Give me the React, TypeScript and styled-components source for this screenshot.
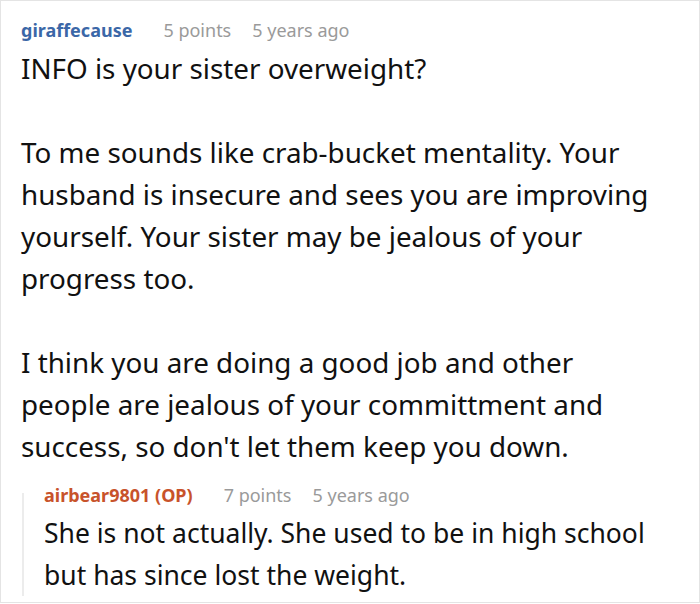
import React from "react";
import styled, { createGlobalStyle } from "styled-components";

const GlobalStyle = createGlobalStyle`
  html, body {
    margin: 0;
    padding: 0;
    background: #fff;
  }
  body {
    font-family: "Noto Sans", "Open Sans", sans-serif;
    color: #111;
  }
`;

const Card = styled.div`
  box-sizing: border-box;
  width: 700px;
  height: 603px;
  border: 1px solid #e4e4e4;
  padding: 17px 20px 0 20px;
  overflow: hidden;
`;

const Meta = styled.div`
  display: flex;
  align-items: center;
  height: 24px;
  font-size: 18px;
  line-height: 24px;
  margin-bottom: 5px;
`;

const Author = styled.span<{ $op?: boolean }>`
  font-weight: 700;
  color: ${(p) => (p.$op ? "#c8532b" : "#3b67a7")};
  margin-right: 31px;
`;

const Stat = styled.span`
  color: #9a9a9a;
  margin-right: 21px;
`;

const Body = styled.div<{ $width?: number; $size: number }>`
  width: ${(p) => (p.$width ? `${p.$width}px` : "auto")};
  font-size: ${(p) => p.$size}px;
  line-height: 42px;

  p {
    margin: 0;
  }

  p + p {
    margin-top: 42px;
  }
`;

const Reply = styled.div`
  position: relative;
  margin: 16px 0 0 1px;
  padding-left: 22px;

  &::before {
    content: "";
    position: absolute;
    left: 0;
    top: 10px;
    bottom: 0;
    width: 2px;
    background: #ececec;
  }
`;

const App = () => {
  return (
    <>
      <GlobalStyle />
      <Card>
        <Meta>
          <Author>giraffecause</Author>
          <Stat>5 points</Stat>
          <Stat>5 years ago</Stat>
        </Meta>
        <Body $width={636} $size={27.8}>
          <p>INFO is your sister overweight?</p>
          <p>
            To me sounds like crab-bucket mentality. Your husband is insecure
            and sees you are improving yourself. Your sister may be jealous of
            your progress too.
          </p>
          <p>
            I think you are doing a good job and other people are jealous of
            your committment and success, so don't let them keep you down.
          </p>
        </Body>
        <Reply>
          <Meta>
            <Author $op>airbear9801 (OP)</Author>
            <Stat>7 points</Stat>
            <Stat>5 years ago</Stat>
          </Meta>
          <Body $size={26.5}>
            <p>
              She is not actually. She used to be in high school but has since
              lost the weight.
            </p>
          </Body>
        </Reply>
      </Card>
    </>
  );
};

export default App;
